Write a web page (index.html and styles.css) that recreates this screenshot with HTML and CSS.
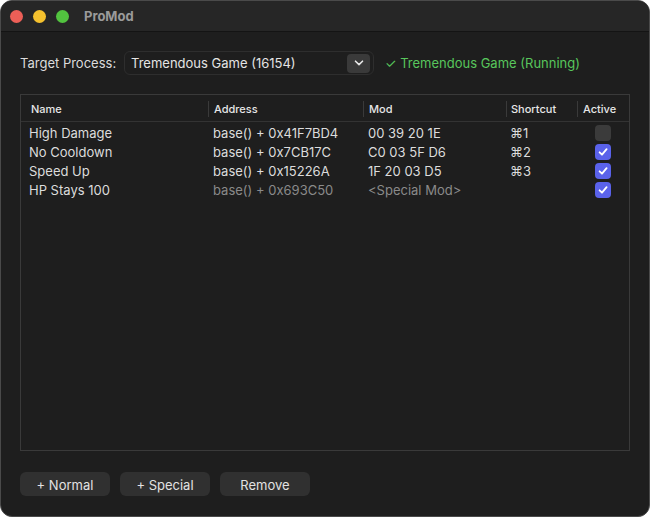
FILE: index.html
```html
<!DOCTYPE html>
<html lang="en">
<head>
    <meta charset="UTF-8">
    <meta name="viewport" content="width=device-width, initial-scale=1.0">
    <title>ProMod</title>
    <link rel="stylesheet" href="styles.css">
</head>
<body>

<div class="window">
    <div class="titlebar">
        <div class="lights">
            <span class="light red"></span>
            <span class="light yellow"></span>
            <span class="light green"></span>
        </div>
        <div class="title">ProMod</div>
    </div>

    <div class="content">
        <div class="target-row">
            <span class="label">Target Process:</span>
            <div class="popup">
                <span>Tremendous Game (16154)</span>
                <span class="popup-arrow">
                    <svg width="10" height="6" viewBox="0 0 10 6"><path d="M1.5 1.2 L5 4.6 L8.5 1.2" fill="none" stroke="#e6e6e6" stroke-width="1.6" stroke-linecap="round" stroke-linejoin="round"/></svg>
                </span>
            </div>
            <span class="status">✓ Tremendous Game (Running)</span>
        </div>

        <div class="table">
            <div class="thead">
                <div class="th col-name">Name</div>
                <div class="th col-addr">Address</div>
                <div class="th col-mod">Mod</div>
                <div class="th col-short">Shortcut</div>
                <div class="th col-active">Active</div>
            </div>
            <div class="tbody">
                <div class="tr">
                    <div class="col-name">High Damage</div>
                    <div class="col-addr">base() + 0x41F7BD4</div>
                    <div class="col-mod">00 39 20 1E</div>
                    <div class="col-short">⌘1</div>
                    <div class="col-active"><span class="check"></span></div>
                </div>
                <div class="tr">
                    <div class="col-name">No Cooldown</div>
                    <div class="col-addr">base() + 0x7CB17C</div>
                    <div class="col-mod">C0 03 5F D6</div>
                    <div class="col-short">⌘2</div>
                    <div class="col-active"><span class="check on"><svg width="12" height="12" viewBox="0 0 12 12"><path d="M2.6 6.3 L5 8.7 L9.6 3.2" fill="none" stroke="#fff" stroke-width="1.8" stroke-linecap="round" stroke-linejoin="round"/></svg></span></div>
                </div>
                <div class="tr">
                    <div class="col-name">Speed Up</div>
                    <div class="col-addr">base() + 0x15226A</div>
                    <div class="col-mod">1F 20 03 D5</div>
                    <div class="col-short">⌘3</div>
                    <div class="col-active"><span class="check on"><svg width="12" height="12" viewBox="0 0 12 12"><path d="M2.6 6.3 L5 8.7 L9.6 3.2" fill="none" stroke="#fff" stroke-width="1.8" stroke-linecap="round" stroke-linejoin="round"/></svg></span></div>
                </div>
                <div class="tr">
                    <div class="col-name">HP Stays 100</div>
                    <div class="col-addr dim">base() + 0x693C50</div>
                    <div class="col-mod dim">&lt;Special Mod&gt;</div>
                    <div class="col-short"></div>
                    <div class="col-active"><span class="check on"><svg width="12" height="12" viewBox="0 0 12 12"><path d="M2.6 6.3 L5 8.7 L9.6 3.2" fill="none" stroke="#fff" stroke-width="1.8" stroke-linecap="round" stroke-linejoin="round"/></svg></span></div>
                </div>
            </div>
        </div>

        <div class="buttons">
            <button>+ Normal</button>
            <button>+ Special</button>
            <button>Remove</button>
        </div>
    </div>
</div>

</body>
</html>
```

FILE: styles.css
```css
* {
    box-sizing: border-box;
}
body {
    margin: 0;
    background: #ffffff;
    font-family: Inter, "Noto Sans", sans-serif;
    font-size: 13px;
    color: #dedede;
}
.window {
    width: 650px;
    height: 517px;
    border: 1px solid #4a4a4a;
    border-radius: 12px;
    background: #1e1e1e;
    overflow: hidden;
    display: flex;
    flex-direction: column;
}
.titlebar {
    height: 31px;
    flex: none;
    display: flex;
    align-items: center;
    background: #262626;
    border-bottom: 1px solid #141414;
}
.lights {
    display: flex;
    gap: 10px;
    padding-left: 9px;
}
.light {
    width: 13px;
    height: 13px;
    border-radius: 50%;
}
.light.red { background: #ec5f57; }
.light.yellow { background: #f5c12e; }
.light.green { background: #52c33f; }
.title {
    margin-left: 15px;
    font-weight: 700;
    font-size: 13px;
    color: #9a9a9a;
}
.content {
    flex: 1;
    display: flex;
    flex-direction: column;
    padding: 19px 19px 19px 19px;
}
.target-row {
    display: flex;
    align-items: center;
    height: 24px;
}
.label {
    width: 104px;
    color: #dcdcdc;
}
.popup {
    width: 250px;
    height: 24px;
    border: 1px solid #2e2e2e;
    border-radius: 6px;
    display: flex;
    align-items: center;
    justify-content: space-between;
    padding: 0 3px 0 6px;
    color: #e4e4e4;
}
.popup-arrow {
    width: 23px;
    height: 19px;
    background: #3a3a3a;
    border-radius: 4px;
    display: flex;
    align-items: center;
    justify-content: center;
}
.status {
    margin-left: 11px;
    color: #58c65c;
}
.table {
    margin-top: 19px;
    height: 357px;
    border: 1px solid #3a3a3a;
    display: flex;
    flex-direction: column;
}
.thead {
    display: flex;
    height: 27px;
    padding-top: 2px;
    align-items: center;
    border-bottom: 1px solid #333;
    font-size: 11px;
    font-weight: 500;
    color: #e6e6e6;
}
.th {
    height: 16px;
    line-height: 16px;
    border-left: 1px solid #3a3a3a;
}
.th.col-name {
    border-left: none;
    padding-left: 10px;
}
.col-name { width: 187px; padding-left: 8px; }
.col-addr { width: 155px; padding-left: 5px; }
.col-mod { width: 143px; padding-left: 5px; }
.col-short { width: 71px; padding-left: 4px; }
.col-active { width: 52px; padding-left: 5px; }
.tbody {
    padding-top: 1px;
}
.tr {
    display: flex;
    align-items: center;
    height: 19px;
    color: #dcdcdc;
}
.tr .col-active {
    display: flex;
    justify-content: center;
    padding-left: 0;
}
.dim {
    color: #8a8a8a;
}
.check {
    width: 16px;
    height: 16px;
    border-radius: 4px;
    background: #3b3b3b;
    display: flex;
    align-items: center;
    justify-content: center;
}
.check.on {
    background: #5a62ea;
}
.buttons {
    margin-top: 21px;
    display: flex;
    gap: 10px;
}
.buttons button {
    width: 90px;
    height: 24px;
    border: none;
    border-radius: 6px;
    background: #303030;
    color: #e2e2e2;
    font-family: Inter, "Noto Sans", sans-serif;
    font-size: 13px;
    padding: 1px 0 0 0;
}
```
